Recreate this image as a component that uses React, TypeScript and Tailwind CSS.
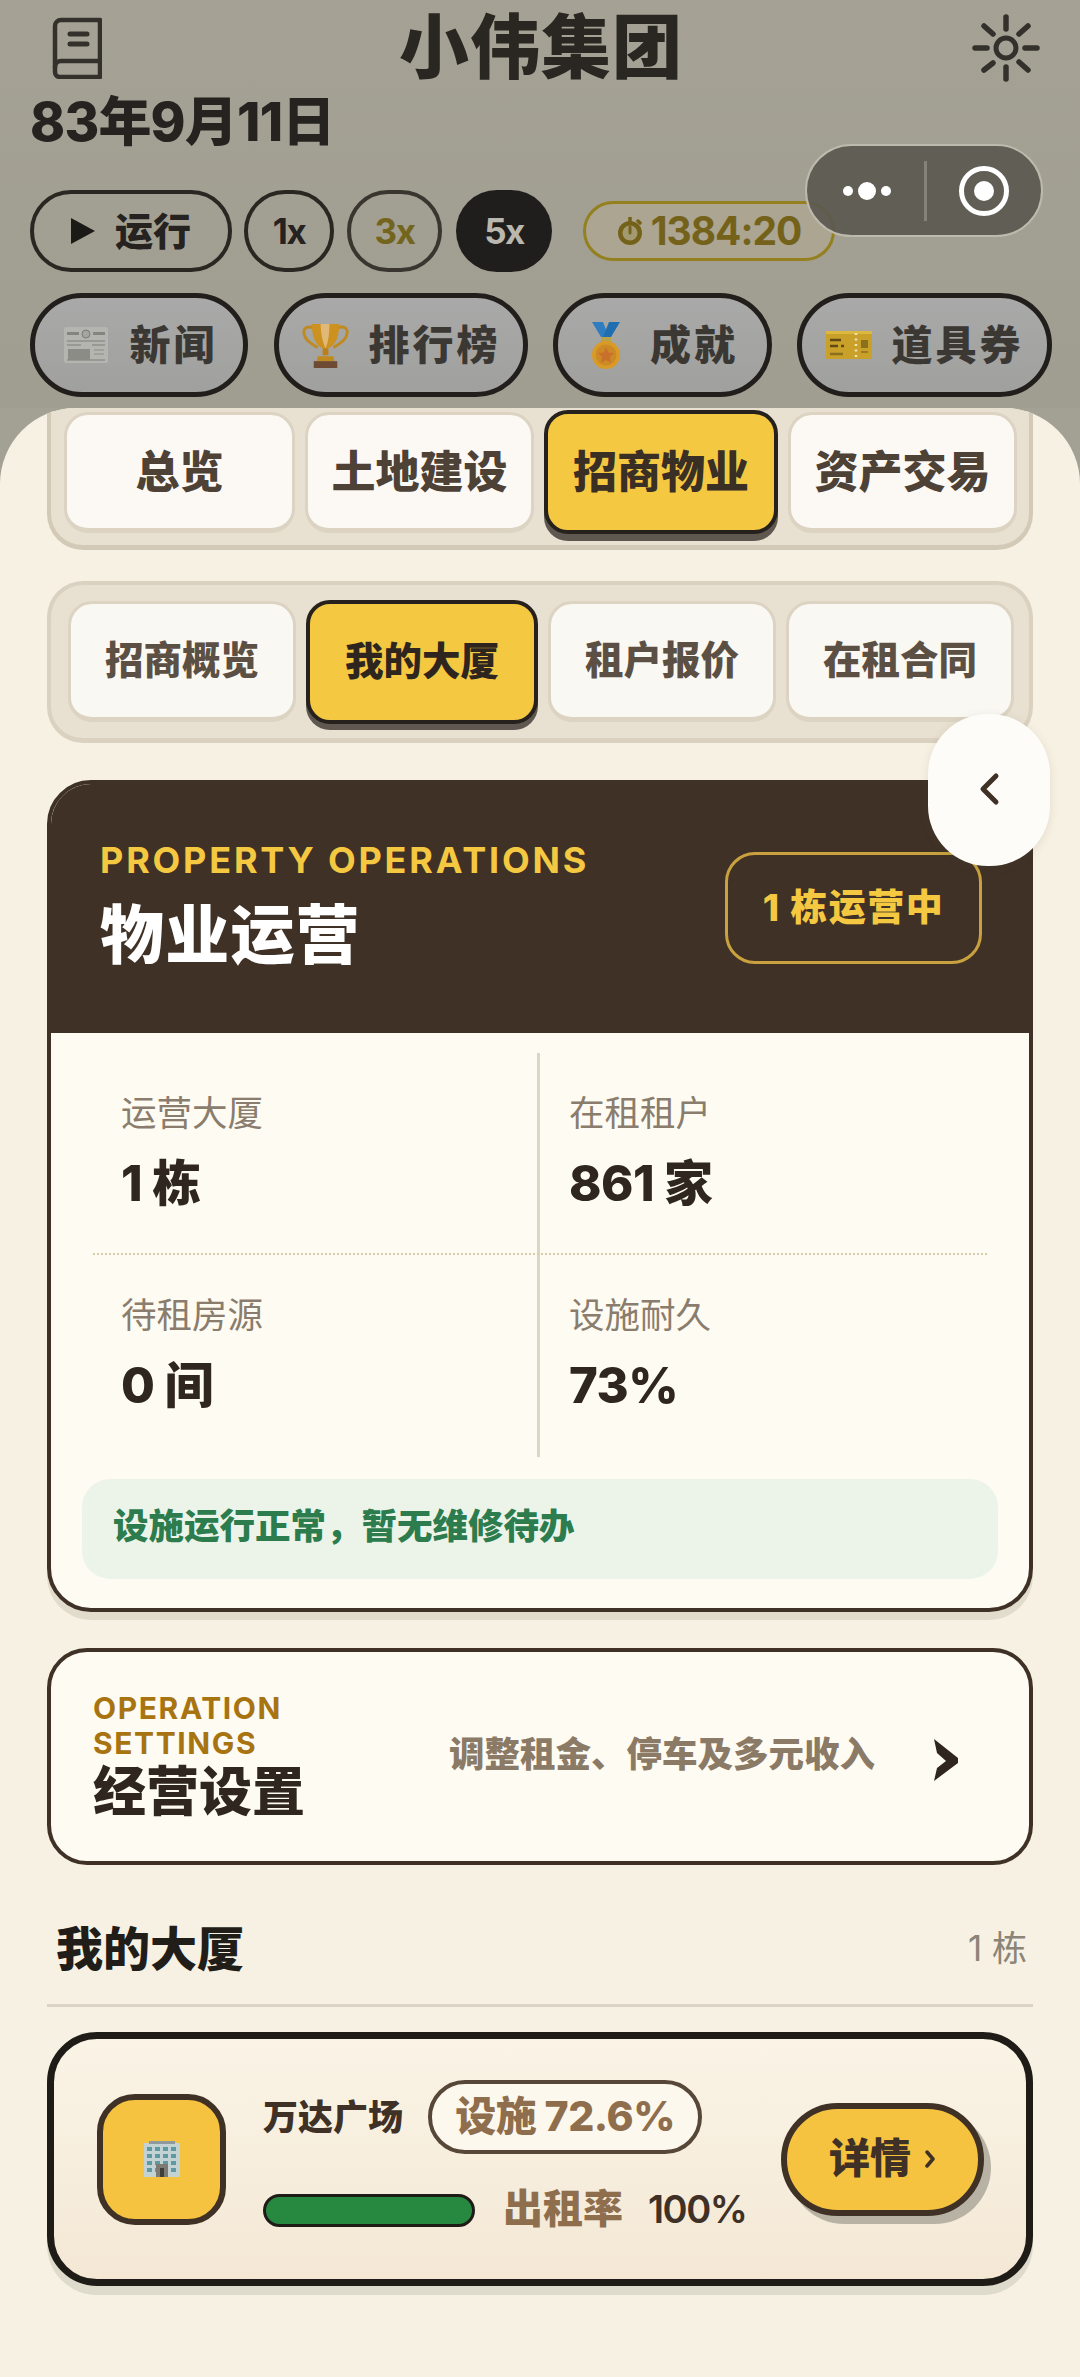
const SECTION_TABS = [
  { name: "总览", width: "w-[231px]" },
  { name: "土地建设", width: "w-[229px]" },
  { name: "招商物业", width: "w-[234px]" },
  { name: "资产交易", width: "w-[229px]" },
];
const SUB_TABS = ["招商概览", "我的大厦", "租户报价", "在租合同"];

const BookIcon = () => (
  <svg width="50" height="62" viewBox="0 0 50 62" fill="none" stroke="#34312c" strokeWidth="4.5" strokeLinecap="round" strokeLinejoin="round">
    <path d="M48 3H9a6 6 0 0 0-6 6v46a5 5 0 0 0 5 5h40z" />
    <path d="M3 50a6 6 0 0 1 6-6h39" />
    <path d="M18 17h17M18 27h17" strokeWidth="5" />
  </svg>
);

const SunIcon = () => (
  <svg width="68" height="68" viewBox="0 0 68 68" fill="none" stroke="#34312c" strokeWidth="5.5" strokeLinecap="round">
    <circle cx="34" cy="34" r="10" strokeWidth="5" />
    <path d="M34 3v12M34 53v12M3 34h12M53 34h12M12 12l9 8M47 48l9 8M56 12l-9 8M12 56l9-7" />
  </svg>
);

const TimerIcon = () => (
  <svg width="26" height="28" viewBox="0 0 26 28" fill="none" strokeLinecap="round">
    <circle cx="13" cy="16" r="12" fill="#74621a" />
    <path d="M13 0v5M21 4l2 2" stroke="#74621a" strokeWidth="3.5" />
    <circle cx="13" cy="16" r="7.5" fill="#a39a72" />
    <path d="M13 10v6" stroke="#74621a" strokeWidth="3" />
  </svg>
);

const NewsIcon = () => (
  <svg width="44" height="36" viewBox="0 0 44 36">
    <rect width="44" height="36" rx="2" fill="#b4b4b0" />
    <rect x="3" y="5" width="12" height="3" fill="#85857f" />
    <rect x="29" y="5" width="12" height="3" fill="#85857f" />
    <circle cx="22" cy="7" r="4" fill="#a5a5a0" stroke="#7c7c76" />
    <path d="M3 14h38M3 18h14M28 18h13M3 33h38" stroke="#8f8f8a" strokeWidth="1.5" />
    <rect x="4" y="22" width="22" height="11" fill="#8c8c86" />
    <path d="M30 23h10M30 27h10" stroke="#9a9a95" strokeWidth="1.5" />
  </svg>
);

const TrophyIcon = () => (
  <svg width="47" height="46" viewBox="0 0 48 47" fill="none">
    <path d="M12 6C3 3 0 8 3 15c2 5 8 8 13 11M36 6c9-3 12 2 9 9-2 5-8 8-13 11" stroke="#c18a1e" strokeWidth="3" />
    <path d="M10 2h28c0 14-4 23-14 26C14 25 10 16 10 2z" fill="#cd911f" />
    <path d="M19 2h9c0 10-1 18-4 25-3-7-5-15-5-25z" fill="#e0b878" />
    <path d="M21 27h6v7h-6z" fill="#b9801d" />
    <path d="M16 35h16l1 5H15z" fill="#c18a1e" />
    <rect x="12" y="40" width="24" height="7" fill="#6f4a33" />
  </svg>
);

const MedalIcon = () => (
  <svg width="28" height="47" viewBox="0 0 28 47">
    <path d="M0 0h11l6 15H9z" fill="#2f7cc0" />
    <path d="M28 0H17l-6 15h8z" fill="#1f6fb0" />
    <rect x="9" y="15" width="10" height="5" fill="#b9a24a" />
    <circle cx="14" cy="33" r="14" fill="#d99a26" />
    <circle cx="14" cy="33" r="10.5" fill="#cc8a26" />
    <path d="M14 25l2.4 5.6 6 .5-4.6 4 1.4 6L14 38l-5.2 3.1 1.4-6-4.6-4 6-.5z" fill="#c8702c" />
  </svg>
);

const TicketIcon = () => (
  <svg width="46" height="28" viewBox="0 0 46 28">
    <rect width="46" height="28" fill="#c9a029" />
    <rect width="46" height="3" fill="#dcb83f" />
    <path d="M4 9h11M4 15h8M15 15h3" stroke="#5e4a12" strokeWidth="2.5" />
    <path d="M4 23h13" stroke="#8a6f1c" strokeWidth="2.5" />
    <path d="M30 2v26" stroke="#eee4bb" strokeWidth="2.5" strokeDasharray="2 3.5" />
    <rect x="35" y="9" width="7" height="8" fill="#8a6f1c" />
    <path d="M35 21h7" stroke="#8a6f1c" strokeWidth="1.5" />
  </svg>
);

const BuildingIcon = () => (
  <svg width="38" height="36" viewBox="0 0 38 36">
    <rect x="1" y="2" width="36" height="34" fill="#c3d3d4" />
    <rect x="6" y="0" width="26" height="3" fill="#8e9a9c" />
    {[6, 13, 20, 27].map((y) =>
      [4, 12, 20, 28].map((x) => (
        <rect key={`${x}-${y}`} x={x} y={y} width="5" height="4" fill="#5f9aa2" />
      ))
    )}
    <rect x="13" y="23" width="12" height="13" fill="#7c7a72" />
    <rect x="17" y="27" width="4" height="9" fill="#3f3f3a" />
  </svg>
);

const ToolPill = ({ icon, label, className }: { icon: React.ReactNode; label: string; className: string }) => (
  <div className={`flex h-[104px] items-center justify-center rounded-full border-[5px] border-[#211e1b] bg-gradient-to-b from-[#a9a9a9] to-[#a0a09e] ${className}`}>
    {icon}
    <span className="text-[41px] leading-none font-extrabold tracking-[3px] text-[#3b3834]">{label}</span>
  </div>
);

const Stat = ({ label, value, unit, className }: { label: string; value: string; unit?: string; className: string }) => (
  <div className={`flex flex-col ${className}`}>
    <span className="text-[35.5px] leading-[40px] text-[#8a7d6d]">{label}</span>
    <span className="mt-[21px] flex h-[56px] items-center gap-[10px] text-[49px] leading-none font-extrabold tracking-[-0.5px] text-[#2f271f]">
      {value}
      {unit && <span>{unit}</span>}
    </span>
  </div>
);

export default function App() {
  return (
    <div className="relative h-[2377px] w-[1080px] overflow-hidden bg-[#a3a094] font-['Inter','Noto_Sans_CJK_SC',sans-serif]">
      {/* top bar, dimmed by the sheet's mask */}
      <header className="h-[408px] bg-gradient-to-b from-[#a5a295] to-[#a09e91]">
        <div className="flex h-[94px] items-center justify-between pt-[2px] pr-[40px] pl-[52px]">
          <BookIcon />
          <h1 className="pl-[8px] text-[70px] leading-none font-extrabold tracking-[1px] text-[#2a2722]">小伟集团</h1>
          <SunIcon />
        </div>
        <p className="pl-[30px] text-[53px] leading-[56px] font-extrabold tracking-[-0.8px] text-[#25221f]">83年9月11日</p>
        <div className="mt-[40px] flex items-center pl-[30px]">
          <div className="flex h-[82px] w-[202px] items-center justify-center gap-[20px] rounded-full border-[4px] border-[#2a2622] text-[38px] font-extrabold text-[#25221f]">
            <span className="h-0 w-0 border-y-[13px] border-l-[24px] border-y-transparent border-l-[#1c1a17]" />
            运行
          </div>
          <div className="ml-[12px] flex h-[82px] w-[90px] items-center justify-center rounded-full border-[4px] border-[#2a2622] text-[35px] font-bold tracking-[-1.5px] text-[#25221f]">1x</div>
          <div className="ml-[13px] flex h-[82px] w-[95px] items-center justify-center rounded-full border-[4px] border-[#3a362f] text-[35px] font-bold tracking-[-1.5px] text-[#74651e]">3x</div>
          <div className="ml-[14px] flex h-[82px] w-[96px] items-center justify-center rounded-full bg-[#201e1c] text-[35px] font-bold tracking-[-1.5px] text-[#b9b7ae]">5x</div>
          <div className="ml-[31px] flex h-[60px] w-[252px] items-center justify-center gap-[8px] rounded-full border-[3px] border-[#94801f] bg-[#aba591] text-[39px] font-bold tracking-[-1px] text-[#74621a]">
            <TimerIcon />
            1384:20
          </div>
        </div>
        <div className="mt-[21px] flex items-center pl-[30px]">
          <ToolPill className="w-[218px] gap-[22px] pl-[3px]" icon={<NewsIcon />} label="新闻" />
          <ToolPill className="ml-[26px] w-[254px] gap-[20px]" icon={<TrophyIcon />} label="排行榜" />
          <ToolPill className="ml-[25px] w-[219px] gap-[30px] pl-[5px]" icon={<MedalIcon />} label="成就" />
          <ToolPill className="ml-[25px] w-[255px] gap-[20px]" icon={<TicketIcon />} label="道具券" />
        </div>
      </header>

      {/* WeChat capsule */}
      <div className="absolute top-[144px] left-[805px] flex h-[93px] w-[238px] items-center rounded-full border-[2px] border-[#bdb9ad] bg-[#5a574f]/90">
        <div className="flex w-[117px] items-center justify-center gap-[5px] pl-[3px]">
          <span className="h-[10px] w-[10px] rounded-full bg-white" />
          <span className="h-[18px] w-[18px] rounded-full bg-white" />
          <span className="h-[10px] w-[10px] rounded-full bg-white" />
        </div>
        <span className="h-[60px] w-[3px] bg-[#85827a]" />
        <div className="flex flex-1 items-center justify-center">
          <span className="flex h-[50px] w-[50px] items-center justify-center rounded-full border-[5px] border-white">
            <span className="h-[20px] w-[20px] rounded-full bg-white" />
          </span>
        </div>
      </div>

      {/* floating side handle */}
      <div className="absolute top-[714px] left-[928px] z-10 flex h-[152px] w-[122px] items-center justify-center rounded-[60px] bg-[#fdfcf8] pb-[2px] shadow-[0_2px_10px_rgba(90,80,60,0.12)]">
        <svg width="24" height="34" viewBox="0 0 24 34" fill="none" stroke="#3f3126" strokeWidth="5" strokeLinecap="round" strokeLinejoin="round">
          <path d="M19 4L6 17l13 13" />
        </svg>
      </div>

      <main className="h-[1969px] overflow-hidden rounded-t-[76px] bg-[#f7f1e3] px-[47px]">
        {/* section tabs, scrolled under the top edge */}
        <div className="flex h-[142px] gap-[10px] rounded-b-[36px] border-x-[4px] border-b-[5px] border-[#d3c9b7] bg-[#e8e0d0] pt-[4px] pl-[13px]">
          {SECTION_TABS.map((tab) =>
            tab.name === "招商物业" ? (
              <div key={tab.name} className={`mt-[-2px] flex h-[124px] shrink-0 items-center justify-center rounded-[24px] border-[4px] border-[#26211c] bg-[#f5c842] text-[44px] font-extrabold text-[#3a2f25] shadow-[0_7px_0_#5e5850] ${tab.width}`}>
                {tab.name}
              </div>
            ) : (
              <div key={tab.name} className={`flex h-[121px] shrink-0 items-center justify-center rounded-[24px] border-[3px] border-b-[5px] border-[#dcd3c3] bg-[#fcf9f5] text-[44px] font-extrabold text-[#4e4237] ${tab.width}`}>
                {tab.name}
              </div>
            )
          )}
        </div>

        {/* property sub tabs */}
        <div className="mt-[31px] flex h-[162px] gap-[10px] rounded-[36px] border-[4px] border-b-[5px] border-[#dad1c1] bg-[#e8e0d0] pt-[16px] pl-[17px]">
          {SUB_TABS.map((tab) =>
            tab === "我的大厦" ? (
              <div key={tab} className="mt-[-1px] flex h-[124px] w-[232px] shrink-0 items-center justify-center rounded-[24px] border-[4px] border-[#26211c] bg-[#f5c842] text-[38.5px] font-extrabold text-[#2e261e] shadow-[0_6px_0_#5e5850]">
                {tab}
              </div>
            ) : (
              <div key={tab} className="flex h-[121px] w-[228px] shrink-0 items-center justify-center rounded-[24px] border-[3px] border-b-[5px] border-[#dcd3c3] bg-[#faf8f3] text-[38.5px] font-extrabold text-[#5c5044]">
                {tab}
              </div>
            )
          )}
        </div>

        {/* operations card */}
        <section className="mt-[37px] h-[832px] overflow-hidden rounded-[44px] border-[4px] border-[#3f3126] bg-[#fefbf3] shadow-[0_8px_0_#e2dccd]">
          <div className="flex h-[249px] items-start justify-between bg-[#3f3126] pr-[47px] pl-[49px]">
            <div className="pt-[52px]">
              <p className="text-[36px] leading-[48px] font-bold tracking-[2.8px] text-[#f5c842]">PROPERTY OPERATIONS</p>
              <h2 className="mt-[11px] text-[64px] leading-[80px] font-extrabold tracking-[1.2px] text-white">物业运营</h2>
            </div>
            <div className="mt-[68px] flex h-[112px] w-[257px] items-center justify-center rounded-[30px] border-[3px] border-[#c9a23f] text-[37px] font-extrabold tracking-[1.5px] text-[#f5c842]">
              1 栋运营中
            </div>
          </div>
          <div className="relative mx-[42px] mt-[20px] grid h-[404px] grid-cols-2">
            <Stat className="border-r-[3px] border-r-[#ddd5c6] pt-[41px] pl-[28px]" label="运营大厦" value="1" unit="栋" />
            <Stat className="pt-[41px] pl-[29px]" label="在租租户" value="861" unit="家" />
            <Stat className="border-r-[3px] border-r-[#ddd5c6] pt-[41px] pl-[28px]" label="待租房源" value="0" unit="间" />
            <Stat className="pt-[41px] pl-[29px]" label="设施耐久" value="73%" />
            <div className="absolute top-[200px] right-0 left-0 border-t-[2px] border-dotted border-[#d5cba8]" />
          </div>
          <div className="mx-[31px] mt-[22px] flex h-[100px] items-center rounded-[28px] bg-[#ecf4ea] pb-[5px] pl-[31px] text-[35.5px] font-extrabold text-[#2c7c4e]">
            设施运行正常，暂无维修待办
          </div>
        </section>

        {/* settings entry */}
        <section className="mt-[36px] flex h-[217px] items-center rounded-[40px] border-[4px] border-[#3f3126] bg-[#fefbf3] pr-[70px] pl-[42px]">
          <div className="w-[356px]">
            <p className="w-[230px] text-[30px] leading-[35px] font-bold tracking-[1.6px] text-[#a87412]">OPERATION SETTINGS</p>
            <h3 className="text-[53px] leading-[62px] font-extrabold text-[#2f271f]">经营设置</h3>
          </div>
          <p className="mt-[-4px] whitespace-nowrap text-[35.5px] font-extrabold text-[#8a7a66]">调整租金、停车及多元收入</p>
          <svg className="mt-[7px] ml-auto" width="26" height="42" viewBox="0 0 26 42" fill="#2f271f">
            <path d="M1 0l24 19v5L1 42l3-13 9-7-9-8z" />
          </svg>
        </section>

        {/* building list */}
        <div className="mt-[46px] flex h-[96px] items-center justify-between border-b-[3px] border-[#dcd5c5] pb-[18px] pl-[9px]">
          <h3 className="text-[47px] leading-none font-extrabold text-[#211e1a]">我的大厦</h3>
          <span className="pr-[6px] text-[35px] text-[#8b8579]">1 栋</span>
        </div>

        <section className="mt-[25px] flex h-[254px] items-center rounded-[50px] border-[7px] border-[#1f1c18] bg-gradient-to-b from-[#faf4e6] to-[#f4e8d5] pl-[43px] shadow-[0_9px_0_#dedacc]">
          <div className="flex h-[131px] w-[129px] shrink-0 items-center justify-center rounded-[38px] border-[6px] border-[#3f3126] bg-[#f5c33f]">
            <BuildingIcon />
          </div>
          <div className="ml-[37px] mb-[9px] w-[500px]">
            <div className="flex items-center">
              <span className="text-[35px] font-extrabold text-[#3f3126]">万达广场</span>
              <span className="ml-[25px] flex h-[74px] w-[274px] items-center justify-center rounded-full border-[4px] border-[#574738] bg-[#fdf8ee] text-[41px] font-extrabold tracking-[-0.5px] text-[#8f6e4d]">
                设施 72.6%
              </span>
            </div>
            <div className="mt-[35px] flex items-center">
              <div className="mt-[3px] h-[33px] w-[212px] rounded-full border-[3px] border-[#1f1c18] bg-[#27883f]" />
              <span className="ml-[28px] text-[40px] leading-none font-extrabold text-[#8f6e4d]">出租率</span>
              <span className="ml-[25px] text-[38px] leading-none font-semibold tracking-[-1.5px] text-[#3f3126]">100%</span>
            </div>
          </div>
          <div className="ml-[18px] flex h-[113px] w-[203px] shrink-0 items-center justify-center gap-[14px] rounded-full border-[6px] border-[#3f3126] bg-[#f5c33f] text-[41px] font-extrabold text-[#3f3126] shadow-[7px_8px_0_#b8b2a4]">
            详情
            <svg width="11" height="20" viewBox="0 0 11 20" fill="none" stroke="#3f3126" strokeWidth="3.5" strokeLinecap="round" strokeLinejoin="round">
              <path d="M2 3l6 7-6 7" />
            </svg>
          </div>
        </section>
      </main>
    </div>
  );
}
